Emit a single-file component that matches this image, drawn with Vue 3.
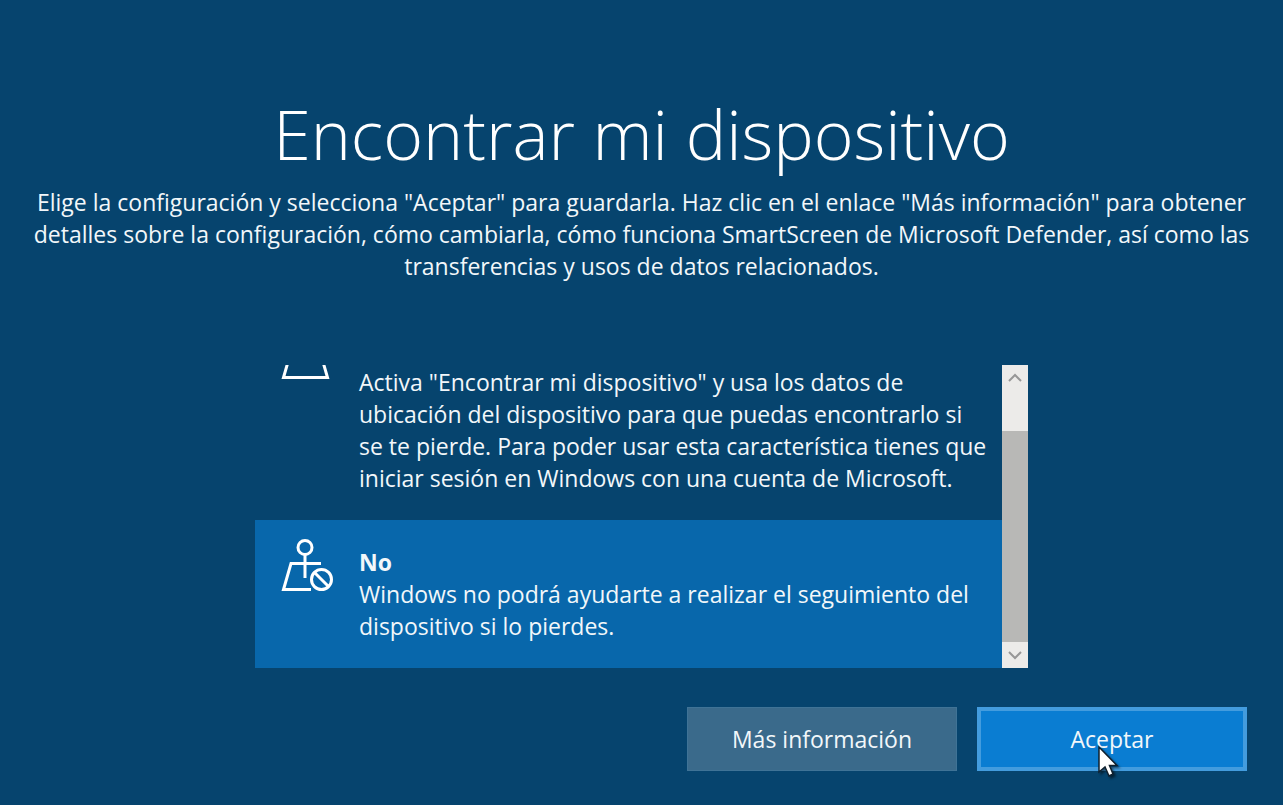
<script setup>
import { ref } from 'vue'

const choice = ref('no')
const intro = [
  'Elige la configuración y selecciona "Aceptar" para guardarla. Haz clic en el enlace "Más información" para obtener',
  'detalles sobre la configuración, cómo cambiarla, cómo funciona SmartScreen de Microsoft Defender, así como las',
  'transferencias y usos de datos relacionados.',
]
const yesLines = [
  'Activa "Encontrar mi dispositivo" y usa los datos de',
  'ubicación del dispositivo para que puedas encontrarlo si',
  'se te pierde. Para poder usar esta característica tienes que',
  'iniciar sesión en Windows con una cuenta de Microsoft.',
]
const noLines = [
  'Windows no podrá ayudarte a realizar el seguimiento del',
  'dispositivo si lo pierdes.',
]
</script>

<template>
  <main class="screen">
    <h1>Encontrar mi dispositivo</h1>
    <p class="intro"><span v-for="l in intro" :key="l" class="line">{{ l }}</span></p>

    <section class="panel">
      <div class="options">
        <label class="option first" :class="{ selected: choice === 'yes' }">
          <input v-model="choice" type="radio" name="find" value="yes" />
          <svg class="icon" viewBox="0 0 54 56" aria-hidden="true">
            <g fill="none" stroke="#fff" stroke-width="3">
              <circle cx="24" cy="9.500" r="7" />
              <path d="M24 16.500V36M20 25.500H10L2.500 51.500H46.500L39 25.500H28" />
            </g>
          </svg>
          <span class="text"><span v-for="l in yesLines" :key="l" class="line">{{ l }}</span></span>
        </label>
        <label class="option" :class="{ selected: choice === 'no' }">
          <input v-model="choice" type="radio" name="find" value="no" />
          <svg class="icon" viewBox="0 0 54 56" aria-hidden="true">
            <g fill="none" stroke="#fff" stroke-width="3">
              <circle cx="24" cy="9.500" r="7" />
              <path d="M24 16.500V40M40 25.500H10L2.500 51.500H30" />
              <circle cx="40.500" cy="41.500" r="10" />
              <path d="M33.500 34.500L47.500 48.500" />
            </g>
          </svg>
          <span class="text">
            <strong class="line">No</strong>
            <span v-for="l in noLines" :key="l" class="line">{{ l }}</span>
          </span>
        </label>
      </div>
      <div class="scrollbar">
        <svg class="arrow" viewBox="0 0 26 26" aria-hidden="true"><path d="M7 16L13 10L19 16" /></svg>
        <div class="track"></div>
        <div class="thumb"></div>
        <svg class="arrow" viewBox="0 0 26 26" aria-hidden="true"><path d="M7 10L13 16L19 10" /></svg>
      </div>
    </section>

    <footer class="actions">
      <button type="button" class="btn">Más información</button>
      <button type="button" class="btn primary">
        Aceptar
        <svg class="cursor" viewBox="0 0 24 34" aria-hidden="true">
          <path d="M2 2V27L8 22L12 31L16 29L12.500 20.500H20Z" fill="#fff" stroke="#10202e" stroke-width="1.500" />
        </svg>
      </button>
    </footer>
  </main>
</template>

<style>
body {
  margin: 0;
  background: #06446e;
}
</style>

<style scoped>
.screen {
  box-sizing: border-box;
  min-height: 100vh;
  padding: 84px 32px 34px;
  display: flex;
  flex-direction: column;
  background: #06446e;
  color: #f2f7fa;
  font-family: "Open Sans", "Noto Sans", sans-serif;
  font-size: 23px;
  line-height: 32px;
}
h1 {
  margin: 0 0 2px;
  text-align: center;
  font-size: 68px;
  line-height: 100px;
  font-weight: 300;
  color: #fff;
}
.intro {
  margin: 0;
  text-align: center;
}
.line {
  display: block;
  white-space: nowrap;
}
.intro .line {
  display: flex;
  justify-content: center;
}
.panel {
  width: 773px;
  max-width: 100%;
  height: 303px;
  margin: 83px auto 0;
  display: flex;
}
.options {
  flex: 1;
  overflow: hidden;
  display: flex;
  flex-direction: column;
  justify-content: flex-end;
}
.option {
  flex: none;
  box-sizing: border-box;
  padding: 18px 24px 26px 26px;
  display: flex;
  gap: 24px;
}
.option input {
  position: absolute;
  opacity: 0;
}
.option.selected {
  background: #0867ab;
}
.icon {
  flex: none;
  width: 54px;
  height: 56px;
}
.text {
  padding-top: 8px;
}
.first .text {
  padding-top: 40px;
}
strong {
  font-weight: 700;
}
.scrollbar {
  width: 26px;
  display: flex;
  flex-direction: column;
  background: #ecebe9;
}
.arrow {
  width: 26px;
  height: 26px;
  fill: none;
  stroke: #979797;
  stroke-width: 2;
}
.track {
  height: 40px;
}
.thumb {
  flex: 1;
  background: #b8b8b6;
}
.actions {
  margin: auto 4px 0;
  display: flex;
  justify-content: flex-end;
  gap: 20px;
}
.btn {
  position: relative;
  width: 270px;
  height: 64px;
  padding: 0;
  border: 1px solid #3f7396;
  background: #3a6a8b;
  color: #f2f7fa;
  font: inherit;
}
.primary {
  border: 4px solid #439cde;
  background: #0a7dd2;
}
.cursor {
  position: absolute;
  left: 116px;
  top: 34px;
  width: 24px;
  height: 34px;
  filter: drop-shadow(2px 2px 1px rgba(0, 0, 0, 0.5));
}
</style>
